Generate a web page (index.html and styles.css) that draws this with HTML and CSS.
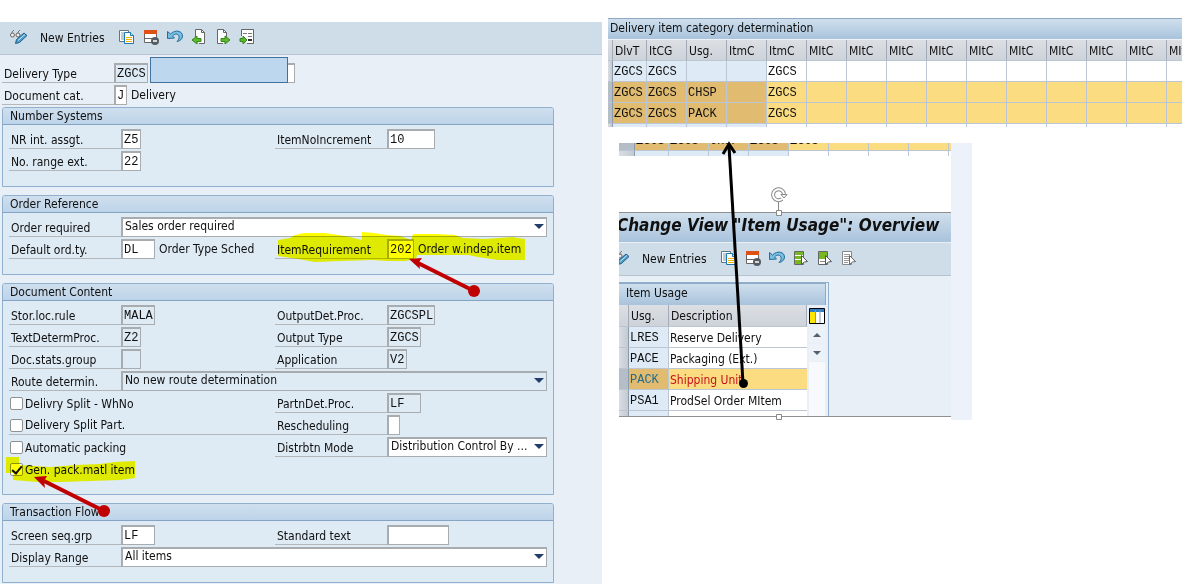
FILE: index.html
```html
<!DOCTYPE html>
<html lang="en">
<head>
<meta charset="utf-8">
<title>Delivery Type Customizing</title>
<link rel="stylesheet" href="styles.css">
</head>
<body>
<svg class="defs" aria-hidden="true">
  <symbol id="i-display" viewBox="0 0 18 16">
    <path d="M2 5V3l2-2M8 5V3l2-2" fill="none" stroke="#777" stroke-width="1"/>
    <circle cx="2.500" cy="6" r="2" fill="#eee" stroke="#666"/><circle cx="8" cy="6" r="2" fill="#eee" stroke="#666"/>
    <path d="M5.500 14.500l1-4 7.500-6.500 3 2.500-7.500 7z" fill="#4b9cc9" stroke="#1d5f8c"/><path d="M8 11.500l7-6" stroke="#c9e6f5"/>
  </symbol>
  <symbol id="i-copy" viewBox="0 0 16 16">
    <path d="M.5 1.500h9v11h-9z" fill="#fff" stroke="#5f7685"/><path d="M2 4h3M2 6h3M2 8h3M2 10h3" stroke="#7d98a8"/>
    <path d="M5.500 3.500h6l3 3v8h-9z" fill="#fff" stroke="#1c78b0"/><path d="M11.500 3.500v3h3" fill="#bfe0f3" stroke="#1c78b0"/><path d="M7 8.500h6M7 10.500h6M7 12.500h6" stroke="#f0b400"/>
  </symbol>
  <symbol id="i-delete" viewBox="0 0 16 16">
    <path d="M1.500 1.500h12v12h-12z" fill="#fff" stroke="#666"/><path d="M1 1h13v4H1z" fill="#dd5115"/><path d="M1 9.500h12" stroke="#666" stroke-width="1"/>
    <circle cx="12" cy="12" r="4" fill="#555c63"/><path d="M10 12h4" stroke="#fff" stroke-width="1.500"/>
  </symbol>
  <symbol id="i-undo" viewBox="0 0 16 16">
    <path d="M.5 2.500v7l7-.5-2-2c3-3 6-2 6.500.5.500 2-.5 3.500-2 5C13 12 15.500 10 15.500 7c0-5-7-7-12-2z" fill="#79bde1" stroke="#216d9c"/>
  </symbol>
  <symbol id="i-prev" viewBox="0 0 16 16">
    <path d="M4.500 8V.5h6l3 3v11H8" fill="#fff" stroke="#666"/><path d="M10.500.5v3h3" fill="none" stroke="#666"/>
    <path d="M1 11l5-4v2.500h4v3H6V15z" fill="#5fb82e" stroke="#32861c"/>
  </symbol>
  <symbol id="i-next" viewBox="0 0 16 16">
    <path d="M8 14.500H2.500V.5h6l3 3V8" fill="#fff" stroke="#666"/><path d="M8.500.5v3h3" fill="none" stroke="#666"/>
    <path d="M15 11l-5-4v2.500H6v3h4V15z" fill="#5fb82e" stroke="#32861c"/>
  </symbol>
  <symbol id="i-position" viewBox="0 0 16 16">
    <path d="M2.500 7V.5h12v14H8" fill="#fff" stroke="#666"/><path d="M4 4.500h4M9 4.500h4M9 7.500h4" stroke="#777"/><path d="M9 11h4" stroke="#333" stroke-width="2"/>
    <path d="M8 11L4 7v2.500H1v3h3V15z" fill="#5fb82e" stroke="#32861c"/>
  </symbol>
  <symbol id="i-all" viewBox="0 0 16 16">
    <path d="M1.500 1.500h9v13h-9z" fill="#fff" stroke="#666"/><path d="M2 2h8v3H2zM2 6h8v3H2zM2 10h8v4H2z" fill="#78b81f"/><path d="M8.500 5.500l6 6-3 .5-3 2.500z" fill="#fff" stroke="#555"/>
  </symbol>
  <symbol id="i-block" viewBox="0 0 16 16">
    <path d="M1.500 1.500h9v13h-9z" fill="#fff" stroke="#666"/><path d="M2 2h8v7H2z" fill="#78b81f"/><path d="M3 11.500h5" stroke="#888"/><path d="M8.500 5.500l6 6-3 .5-3 2.500z" fill="#fff" stroke="#555"/>
  </symbol>
  <symbol id="i-none" viewBox="0 0 16 16">
    <path d="M1.500 1.500h9v13h-9z" fill="#fff" stroke="#888"/><path d="M3 4.500h6M3 6.500h6M3 8.500h5M3 10.500h5M3 12.500h4" stroke="#999"/><path d="M8.500 5.500l6 6-3 .5-3 2.500z" fill="#fff" stroke="#666"/>
  </symbol>
</svg>

<main class="sheet">
  <section class="editor">
    <div class="toolbar">
      <button class="tool tool-wide" aria-label="Display/Change"><svg><use href="#i-display"/></svg></button>
      <button class="tool-text">New Entries</button>
      <div class="tools">
        <button class="tool" aria-label="Copy"><svg><use href="#i-copy"/></svg></button>
        <button class="tool" aria-label="Delete"><svg><use href="#i-delete"/></svg></button>
        <button class="tool" aria-label="Undo"><svg><use href="#i-undo"/></svg></button>
        <button class="tool" aria-label="Previous entry"><svg><use href="#i-prev"/></svg></button>
        <button class="tool" aria-label="Next entry"><svg><use href="#i-next"/></svg></button>
        <button class="tool" aria-label="Position"><svg><use href="#i-position"/></svg></button>
      </div>
    </div>

    <form class="form">
      <div class="head">
        <div class="row">
          <label class="label" for="dtype">Delivery Type</label>
          <div class="value"><input id="dtype" class="field w4 locked" value="ZGCS" readonly><div class="name"><input class="field name-field" aria-label="Description"><div class="cover"></div></div></div>
        </div>
        <div class="row">
          <label class="label" for="dcat">Document cat.</label>
          <div class="value"><input id="dcat" class="field w1" value="J"><span class="note">Delivery</span></div>
        </div>
      </div>

      <fieldset class="group">
        <legend class="title">Number Systems</legend>
        <div class="rows">
          <div class="row">
            <label class="label" for="nrint">NR int. assgt.</label><div class="value"><input id="nrint" class="field w2" value="Z5"></div>
            <label class="label" for="incr">ItemNoIncrement</label><div class="value"><input id="incr" class="field w6" value="10"></div>
          </div>
          <div class="row"><label class="label" for="nrext">No. range ext.</label><div class="value"><input id="nrext" class="field w2" value="22"></div></div>
        </div>
      </fieldset>

      <fieldset class="group">
        <legend class="title">Order Reference</legend>
        <div class="rows">
          <div class="row">
            <label class="label" for="oreq">Order required</label>
            <div class="pick span"><select id="oreq" class="select"><option>Sales order required</option></select></div>
          </div>
          <div class="row">
            <label class="label" for="oty">Default ord.ty.</label><div class="value"><input id="oty" class="field w4" value="DL"><span class="note">Order Type Sched</span></div>
            <label class="label" for="ireq">ItemRequirement</label><div class="value"><input id="ireq" class="field w3" value="202"><span class="note">Order w.indep.item</span></div>
          </div>
        </div>
      </fieldset>

      <fieldset class="group">
        <legend class="title">Document Content</legend>
        <div class="rows">
          <div class="row">
            <label class="label" for="stor">Stor.loc.rule</label><div class="value"><input id="stor" class="field w4 locked" value="MALA" readonly></div>
            <label class="label" for="oproc">OutputDet.Proc.</label><div class="value"><input id="oproc" class="field w6 locked" value="ZGCSPL" readonly></div>
          </div>
          <div class="row">
            <label class="label" for="tproc">TextDetermProc.</label><div class="value"><input id="tproc" class="field w2 locked" value="Z2" readonly></div>
            <label class="label" for="otype">Output Type</label><div class="value"><input id="otype" class="field w4 locked" value="ZGCS" readonly></div>
          </div>
          <div class="row">
            <label class="label" for="stats">Doc.stats.group</label><div class="value"><input id="stats" class="field w2 locked" readonly></div>
            <label class="label" for="appl">Application</label><div class="value"><input id="appl" class="field w2 locked" value="V2" readonly></div>
          </div>
          <div class="row">
            <label class="label" for="route">Route determin.</label>
            <div class="pick span"><select id="route" class="select locked"><option>No new route determination</option></select></div>
          </div>
          <div class="row">
            <label class="check"><input type="checkbox" class="box">Delivry Split - WhNo</label>
            <label class="label" for="pproc">PartnDet.Proc.</label><div class="value"><input id="pproc" class="field w4 locked" value="LF" readonly></div>
          </div>
          <div class="row">
            <label class="check lined"><input type="checkbox" class="box">Delivery Split Part.</label>
            <label class="label" for="resch">Rescheduling</label><div class="value"><input id="resch" class="field w1"></div>
          </div>
          <div class="row">
            <label class="check"><input type="checkbox" class="box">Automatic packing</label>
            <label class="label" for="dmode">Distrbtn Mode</label>
            <div class="pick"><select id="dmode" class="select"><option>Distribution Control By ...</option></select></div>
          </div>
          <div class="row"><label class="check"><input type="checkbox" class="box" checked>Gen. pack.matl item</label></div>
        </div>
      </fieldset>

      <fieldset class="group">
        <legend class="title">Transaction Flow</legend>
        <div class="rows">
          <div class="row">
            <label class="label" for="seq">Screen seq.grp</label><div class="value"><input id="seq" class="field w4" value="LF"></div>
            <label class="label" for="stext">Standard text</label><div class="value"><input id="stext" class="field w8"></div>
          </div>
          <div class="row">
            <label class="label" for="range">Display Range</label>
            <div class="pick span"><select id="range" class="select"><option>All items</option></select></div>
          </div>
        </div>
      </fieldset>
    </form>

    <svg class="marker" width="602" height="562" viewBox="0 22 602 562" aria-hidden="true">
      <path fill="#ff0" d="M278 240L290 238L295 235L304 233H325L345 236L362 240V232L374 233L387 235L400 236L411 240L413 234H437L455 235L463 238L485 239L512 237L525 239V260H498L478 257L468 255H417L416 259L405 261H388L372 260L340 261L315 262L298 259L278 256Z"/>
      <path fill="#ff0" d="M6 457H19V465L50 467L76 465L100 464L115 462L135 461V478L120 480L90 481L60 482H38L13 480V473H6Z"/>
    </svg>
    <svg class="arrows" width="602" height="562" viewBox="0 22 602 562" aria-hidden="true">
      <path d="M474 291L418 263M104 511L44 481" stroke="#c00000" stroke-width="4"/>
      <path d="M409 259l13-1-3 4 1 7zM34 477l13-1-3 5 1 7z" fill="#c00000"/>
      <circle cx="474" cy="291" r="6" fill="#c00000"/><circle cx="104" cy="511" r="6" fill="#c00000"/>
    </svg>
  </section>

  <div class="side">
    <section class="determination">
      <h2 class="bar">Delivery item category determination</h2>
      <table class="grid">
        <colgroup><col class="c-sel"><col class="c-first"><col span="14" class="c-std"></colgroup>
        <thead><tr><th></th><th>DlvT</th><th>ItCG</th><th>Usg.</th><th>ItmC</th><th>ItmC</th><th>MItC</th><th>MItC</th><th>MItC</th><th>MItC</th><th>MItC</th><th>MItC</th><th>MItC</th><th>MItC</th><th>MItC</th><th>MItC</th></tr></thead>
        <tbody>
          <tr><td class="sel"></td><td class="key">ZGCS</td><td class="key">ZGCS</td><td class="key"></td><td class="key"></td><td>ZGCS</td><td></td><td></td><td></td><td></td><td></td><td></td><td></td><td></td><td></td><td></td></tr>
          <tr class="on"><td class="sel"></td><td class="key">ZGCS</td><td class="key">ZGCS</td><td class="key">CHSP</td><td class="key"></td><td>ZGCS</td><td></td><td></td><td></td><td></td><td></td><td></td><td></td><td></td><td></td><td></td></tr>
          <tr class="on"><td class="sel"></td><td class="key">ZGCS</td><td class="key">ZGCS</td><td class="key">PACK</td><td class="key"></td><td>ZGCS</td><td></td><td></td><td></td><td></td><td></td><td></td><td></td><td></td><td></td><td></td></tr>
          <tr class="cut"><td class="sel"></td><td class="key"></td><td class="key"></td><td class="key"></td><td class="key"></td><td></td><td></td><td></td><td></td><td></td><td></td><td></td><td></td><td></td><td></td><td></td></tr>
        </tbody>
      </table>
    </section>

    <section class="usage">
      <div class="usage-main">
        <div class="peek">
          <table class="grid">
            <colgroup><col class="c-sel-wide"><col class="c-first"><col span="8" class="c-std"></colgroup>
            <tbody>
              <tr class="on"><td class="sel"></td><td class="key">ZGCS</td><td class="key">ZGCS</td><td class="key">CHSP</td><td class="key">ZGCS</td><td>ZGCS</td><td></td><td></td><td></td><td></td></tr>
              <tr class="cut"><td class="sel"></td><td class="key"></td><td class="key"></td><td class="key"></td><td class="key"></td><td></td><td></td><td></td><td></td><td></td></tr>
            </tbody>
          </table>
        </div>
        <div class="window">
          <h1 class="heading">Change View "Item Usage": Overview</h1>
          <div class="toolbar toolbar-cut">
            <button class="tool tool-wide" aria-label="Display/Change"><svg><use href="#i-display"/></svg></button>
            <button class="tool-text">New Entries</button>
            <div class="tools">
              <button class="tool" aria-label="Copy"><svg><use href="#i-copy"/></svg></button>
              <button class="tool" aria-label="Delete"><svg><use href="#i-delete"/></svg></button>
              <button class="tool" aria-label="Undo"><svg><use href="#i-undo"/></svg></button>
              <button class="tool" aria-label="Select all"><svg><use href="#i-all"/></svg></button>
              <button class="tool" aria-label="Select block"><svg><use href="#i-block"/></svg></button>
              <button class="tool" aria-label="Deselect all"><svg><use href="#i-none"/></svg></button>
            </div>
          </div>
          <div class="list">
            <h2 class="bar bar-list">Item Usage</h2>
            <div class="list-body">
              <table class="grid names">
                <colgroup><col class="c-sel-list"><col class="c-std"><col></colgroup>
                <thead><tr><th></th><th>Usg.</th><th>Description</th></tr></thead>
                <tbody>
                  <tr><td class="sel"></td><td class="key">LRES</td><td>Reserve Delivery</td></tr>
                  <tr><td class="sel"></td><td class="key">PACE</td><td>Packaging (Ext.)</td></tr>
                  <tr class="on"><td class="sel"></td><td class="key">PACK</td><td>Shipping Unit</td></tr>
                  <tr><td class="sel"></td><td class="key">PSA1</td><td>ProdSel Order MItem</td></tr>
                  <tr class="cut"><td class="sel"></td><td class="key"></td><td></td></tr>
                </tbody>
              </table>
              <div class="scroll">
                <button class="config" aria-label="Configuration"><svg width="16" height="16" viewBox="0 0 16 16"><path d="M.5.5h15v15H.5z" fill="#fff" stroke="#000"/><path d="M1 1h14v3H1z" fill="#2d7fc4"/><path d="M1 4h5v11H1z" fill="#ffe600"/><path d="M6.500 2v13M11 2v13" stroke="#8a98a5"/></svg></button>
                <button class="step" aria-label="Scroll up"><svg width="10" height="6" viewBox="0 0 10 6"><path d="M1 5l4-4 4 4z" fill="#52616f"/></svg></button>
                <button class="step" aria-label="Scroll down"><svg width="10" height="6" viewBox="0 0 10 6"><path d="M1 1l4 4 4-4z" fill="#52616f"/></svg></button>
                <div class="track"></div>
              </div>
            </div>
          </div>
        </div>
      </div>
      <svg class="arrows" width="353" height="280" viewBox="619 143 353 280" aria-hidden="true">
        <path d="M778.500 201v9" stroke="#888"/><path d="M782 199a5.500 5.500 0 1 1 2-5" fill="none" stroke="#888" stroke-width="4"/><path d="M782 199a5.500 5.500 0 1 1 2-5" fill="none" stroke="#fff" stroke-width="2"/><path d="M781 194.500h6l-3 3.500z" fill="#fff" stroke="#888"/>
        <path d="M776.500 210.500h5v5h-5zM776.500 414.500h5v5h-5z" fill="#fff" stroke="#888"/>
        <path d="M743 383L729 146" stroke="#000" stroke-width="3"/><path d="M723 154l6-10 6 9" fill="none" stroke="#000" stroke-width="3"/><circle cx="743.500" cy="383.500" r="4.500"/>
      </svg>
    </section>
  </div>
</main>
</body>
</html>
```
FILE: styles.css
```css
* { box-sizing: border-box; }
body { margin: 0; background: #fff; color: #101010; font: 12px/18px "DejaVu Sans Condensed", Tahoma, "DejaVu Sans", sans-serif; }
button, input, select { margin: 0; font: inherit; color: inherit; }
button { padding: 0; border: 0; background: none; }
.defs { position: absolute; width: 0; height: 0; }

.sheet { display: grid; grid-template-columns: minmax(0, 602fr) minmax(0, 574fr); gap: 6px; padding: 18px 18px 0 0; align-items: start; }
.editor { position: relative; margin-top: 4px; min-width: 554px; background: #e8eff7; }

.toolbar { display: flex; align-items: center; height: 33px; padding: 0 0 2px 10px; background: #cfdde8; border-bottom: 1px solid #b4c4d2; }
.tool { display: block; width: 16px; height: 16px; }
.tool-wide { width: 18px; }
.tool svg { display: block; width: 100%; height: 100%; }
.tool-text { width: 68px; margin: 0 11px 0 12px; padding-top: 2px; text-align: left; white-space: nowrap; }
.tools { display: flex; gap: 8px; }

.form { display: grid; gap: 8px; padding: 7px 48px 1px 2px; }
.head { margin-bottom: -7px; }
.row { display: grid; grid-template-columns: 112px 154px 112px minmax(0, 1fr); align-items: start; height: 22px; padding-top: 1px; }
.label { height: 20px; padding: 2px 0 0 2px; line-height: 18px; border-bottom: 1px solid #b4b7ba; white-space: nowrap; }
.value { display: flex; height: 20px; white-space: nowrap; }
.field { height: 20px; padding: 0 2px; border: 1px solid #a9acaf; border-width: 2px 1px 1px 2px; border-radius: 0; background: #fff; font-family: "Liberation Mono", "Courier New", monospace; }
.locked { background: #deeaf4; }
.w1 { width: 13px; }
.w2 { width: 20px; }
.w3 { width: 27px; }
.w4 { width: 34px; }
.w6 { width: 48px; }
.w8 { width: 62px; }
.w1, .w2, .w3, .w4, .w6 { padding: 0 0 0 1px; }
.note { margin-left: 4px; line-height: 21px; }
.name { position: relative; flex: none; width: 145px; margin-left: 2px; }
.name-field { display: block; width: 100%; }
.cover { position: absolute; left: 0; bottom: 0; width: 138px; height: 26px; background: #bdd7ee; border: 1px solid #41719c; }

.group { min-width: 0; margin: 0; padding: 0; border: 1px solid #8fb0cf; border-radius: 3px 3px 0 0; background: #deeaf4; }
.title { float: left; width: 100%; height: 17px; padding: 0 7px; line-height: 16px; background: linear-gradient(#cfdfee, #bdd4e9); border-bottom: 1px solid #85a3c2; border-radius: 2px 2px 0 0; }
.rows { clear: both; padding: 3px 6px 14px; }
.pick { position: relative; height: 20px; }
.span { grid-column: 2 / -1; }
.pick::after { content: ""; position: absolute; right: 3px; top: 7px; border: 5px solid transparent; border-top-color: #223c6c; border-bottom: 0; pointer-events: none; }
.select { display: block; width: 100%; height: 20px; padding: 0 18px 2px 2px; appearance: none; border: 1px solid #a9acaf; border-width: 2px 1px 1px 2px; border-radius: 0; background: #fff; line-height: 15px; }
.select.locked { background: #deeaf4; }
.check { grid-column: 1 / 3; display: flex; align-items: center; gap: 2px; height: 20px; padding: 1px 0 0 1px; white-space: nowrap; }
.lined { border-bottom: 1px solid #b4b7ba; }
.box { width: 13px; height: 13px; appearance: none; background: #fff; border: 1px solid #8f9295; border-radius: 2px; display: grid; place-content: center; }
.box:checked::before { content: ""; width: 4px; height: 8px; border: solid #111; border-width: 0 2px 2px 0; transform: rotate(40deg); margin-top: -2px; }

.marker, .arrows { position: absolute; left: 0; top: 0; pointer-events: none; }
.marker { mix-blend-mode: multiply; }
.arrows { overflow: visible; }

.side { min-width: 0; }
.determination { overflow: hidden; border-top: 1px solid #8fa9c4; }
.bar { margin: 0; height: 20px; padding-left: 2px; font: inherit; line-height: 19px; background: linear-gradient(#cfdfed, #a9c3dc); }
.grid { width: 100%; table-layout: fixed; border-collapse: separate; border-spacing: 0; background: #fff; }
.determination .grid { width: 599px; border-top: 1px solid #eef2f6; }
.c-sel { width: 5px; }
.c-sel-wide { width: 16px; }
.c-sel-list { width: 10px; }
.c-first { width: 34px; }
.c-std { width: 40px; }
.grid th, .grid td { height: 21px; padding: 1px 0 0 1px; border: solid #bcc6d2; border-width: 0 1px 1px 0; font-weight: normal; text-align: left; line-height: 18px; white-space: nowrap; overflow: hidden; }
.grid th { padding-left: 2px; background: linear-gradient(#dcdfe3, #cdd3da); border-right-color: #a3acb6; }
.grid td { font-family: "Liberation Mono", "Courier New", monospace; }
.grid .key { background: #deebf6; }
.grid .sel { background: linear-gradient(90deg, #d9dee4, #c2cad2); border-right-color: #8e9aa8; }
.on td { background: #fbdc81; }
.grid .on .key { background: #e1bb70; }
.grid .on .sel { background: #b4bec9; }
.grid .cut td { height: 3px; border-bottom: 0; }

.usage { position: relative; margin: 16px 210px 0 11px; padding: 0 21px 3px 0; background: linear-gradient(#edf1fa, #edf1fa) right / 21px 100% no-repeat; }
.usage-main { background: #fff; overflow: hidden; }
.peek { display: flex; align-items: flex-end; height: 13px; overflow: hidden; margin-bottom: 56px; }
.peek .on td { padding-top: 2px; }
.peek .cut td { height: 5px; }
.window { background: #e8eff7; border: solid #8f8f8f; border-width: 1px 0; }
.heading { margin: 0 0 0 -2px; height: 29px; font: italic bold 17px/25px "DejaVu Sans Condensed", Tahoma, sans-serif; white-space: nowrap; background: linear-gradient(#cfdfed, #a9c3dc); }
.toolbar-cut { height: 34px; padding-left: 0; border-top: 1px solid #e8eff7; }
.toolbar-cut .tool-wide { margin-left: -7px; }
.list { width: 210px; margin-top: 6px; padding-right: 2px; border: solid #8fb0cf; border-width: 1px 1px 0 0; }
.bar-list { padding-left: 7px; border: solid #8fa9c4; border-width: 1px 1px 0 0; height: 22px; }
.list-body { display: flex; }
.names { width: 188px; }
.names th { height: 22px; }
.names .cut td { height: 5px; }
.names td:last-child { font-family: inherit; border-right: 0; }
.names .on td { color: #c8101c; }
.names .on .key { color: #256a8c; }
.scroll { display: flex; flex-direction: column; width: 19px; gap: 1px; padding: 2px 1px 0 2px; }
.config { display: block; width: 16px; height: 18px; }
.config svg, .step svg { display: block; margin: auto; }
.step { width: 16px; height: 17px; background: #edf2f8; }
.track { flex: 1; background: #f7f9fc; }
```
